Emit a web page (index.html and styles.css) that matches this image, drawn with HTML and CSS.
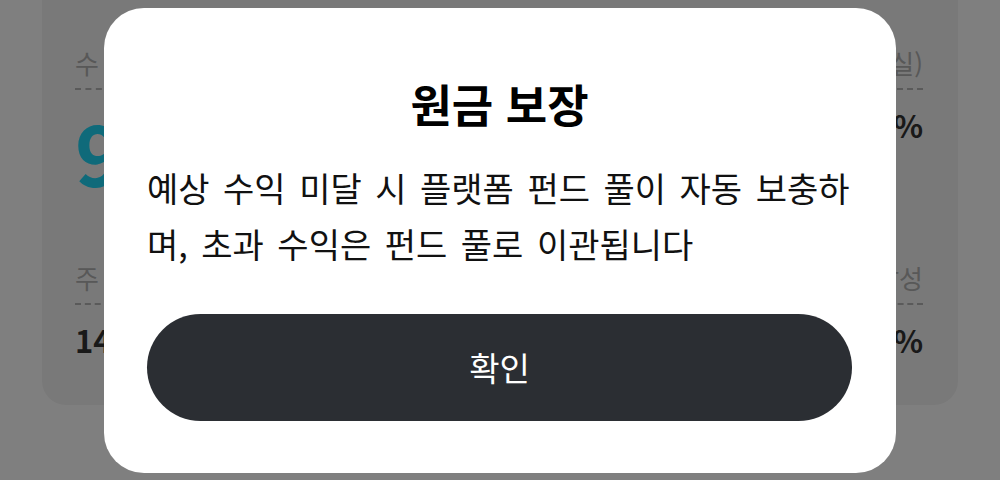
FILE: index.html
```html
<!DOCTYPE html>
<html lang="ko">

<head>
  <meta charset="UTF-8">
  <meta name="viewport" content="width=device-width, initial-scale=1.0">
  <title>원금 보장</title>
  <link rel="stylesheet" href="styles.css">
</head>

<body>
  <div class="page">
    <section class="summary">
      <div class="stat">
        <span class="stat-label">수 익률</span>
        <span class="stat-value big">9.2%</span>
      </div>
      <div class="stat right">
        <span class="stat-label">원금 보장 (손실)</span>
        <span class="stat-value">0%</span>
      </div>
      <div class="stat">
        <span class="stat-label">주 평균 수익</span>
        <span class="stat-value">14,200원</span>
      </div>
      <div class="stat right">
        <span class="stat-label">목표 달성</span>
        <span class="stat-value">86%</span>
      </div>
    </section>
  </div>

  <div class="overlay">
    <div class="modal" role="dialog">
      <h2 class="modal-title">원금 보장</h2>
      <p class="modal-text">예상 수익 미달 시 플랫폼 펀드 풀이 자동 보충하며, 초과 수익은 펀드 풀로 이관됩니다</p>
      <button class="modal-btn" type="button">확인</button>
    </div>
  </div>
</body>

</html>
```

FILE: styles.css
```css
body {
  margin: 0;
  background: #fff;
  font-family: "Noto Sans CJK KR", "Noto Sans", sans-serif;
  color: #111;
}

.page {
  padding: 0 42px;
}

.summary {
  margin-top: -30px;
  padding: 76px 35px 45px 33px;
  background: #f3f3f3;
  border-radius: 24px;
  display: grid;
  grid-template-columns: 1fr 1fr;
  row-gap: 64px;
}

.stat {
  display: flex;
  flex-direction: column;
  align-items: flex-start;
}

.stat.right {
  align-items: flex-end;
}

.stat-label {
  font-size: 26px;
  line-height: 34px;
  color: #b0b0b0;
  padding-bottom: 8px;
  border-bottom: 2px dashed #b4b4b4;
}

.stat-value {
  margin-top: 15px;
  font-size: 31px;
  line-height: 40px;
  font-weight: 700;
  color: #333;
}

.stat-value.big {
  margin-top: 17px;
  font-size: 82px;
  line-height: 90px;
  color: #1ed4f4;
}

/* dialog */

.overlay {
  position: fixed;
  inset: 0;
  background: rgba(0, 0, 0, 0.5);
  display: flex;
  align-items: center;
  justify-content: center;
}

.modal {
  width: 792px;
  box-sizing: border-box;
  padding: 70px 44px 52px 43px;
  background: #fff;
  border-radius: 40px;
}

.modal-title {
  margin: 0;
  text-align: center;
  font-size: 45px;
  line-height: 52px;
  font-weight: 700;
  color: #000;
}

.modal-text {
  margin: 30px 0 42px;
  font-size: 34px;
  line-height: 56px;
  color: #111;
  word-break: break-all;
  word-spacing: 4px;
}

.modal-btn {
  display: block;
  width: 100%;
  height: 107px;
  border: 0;
  border-radius: 54px;
  background: #2b2e33;
  color: #fff;
  font-family: inherit;
  font-size: 33px;
  font-weight: 400;
}
```
